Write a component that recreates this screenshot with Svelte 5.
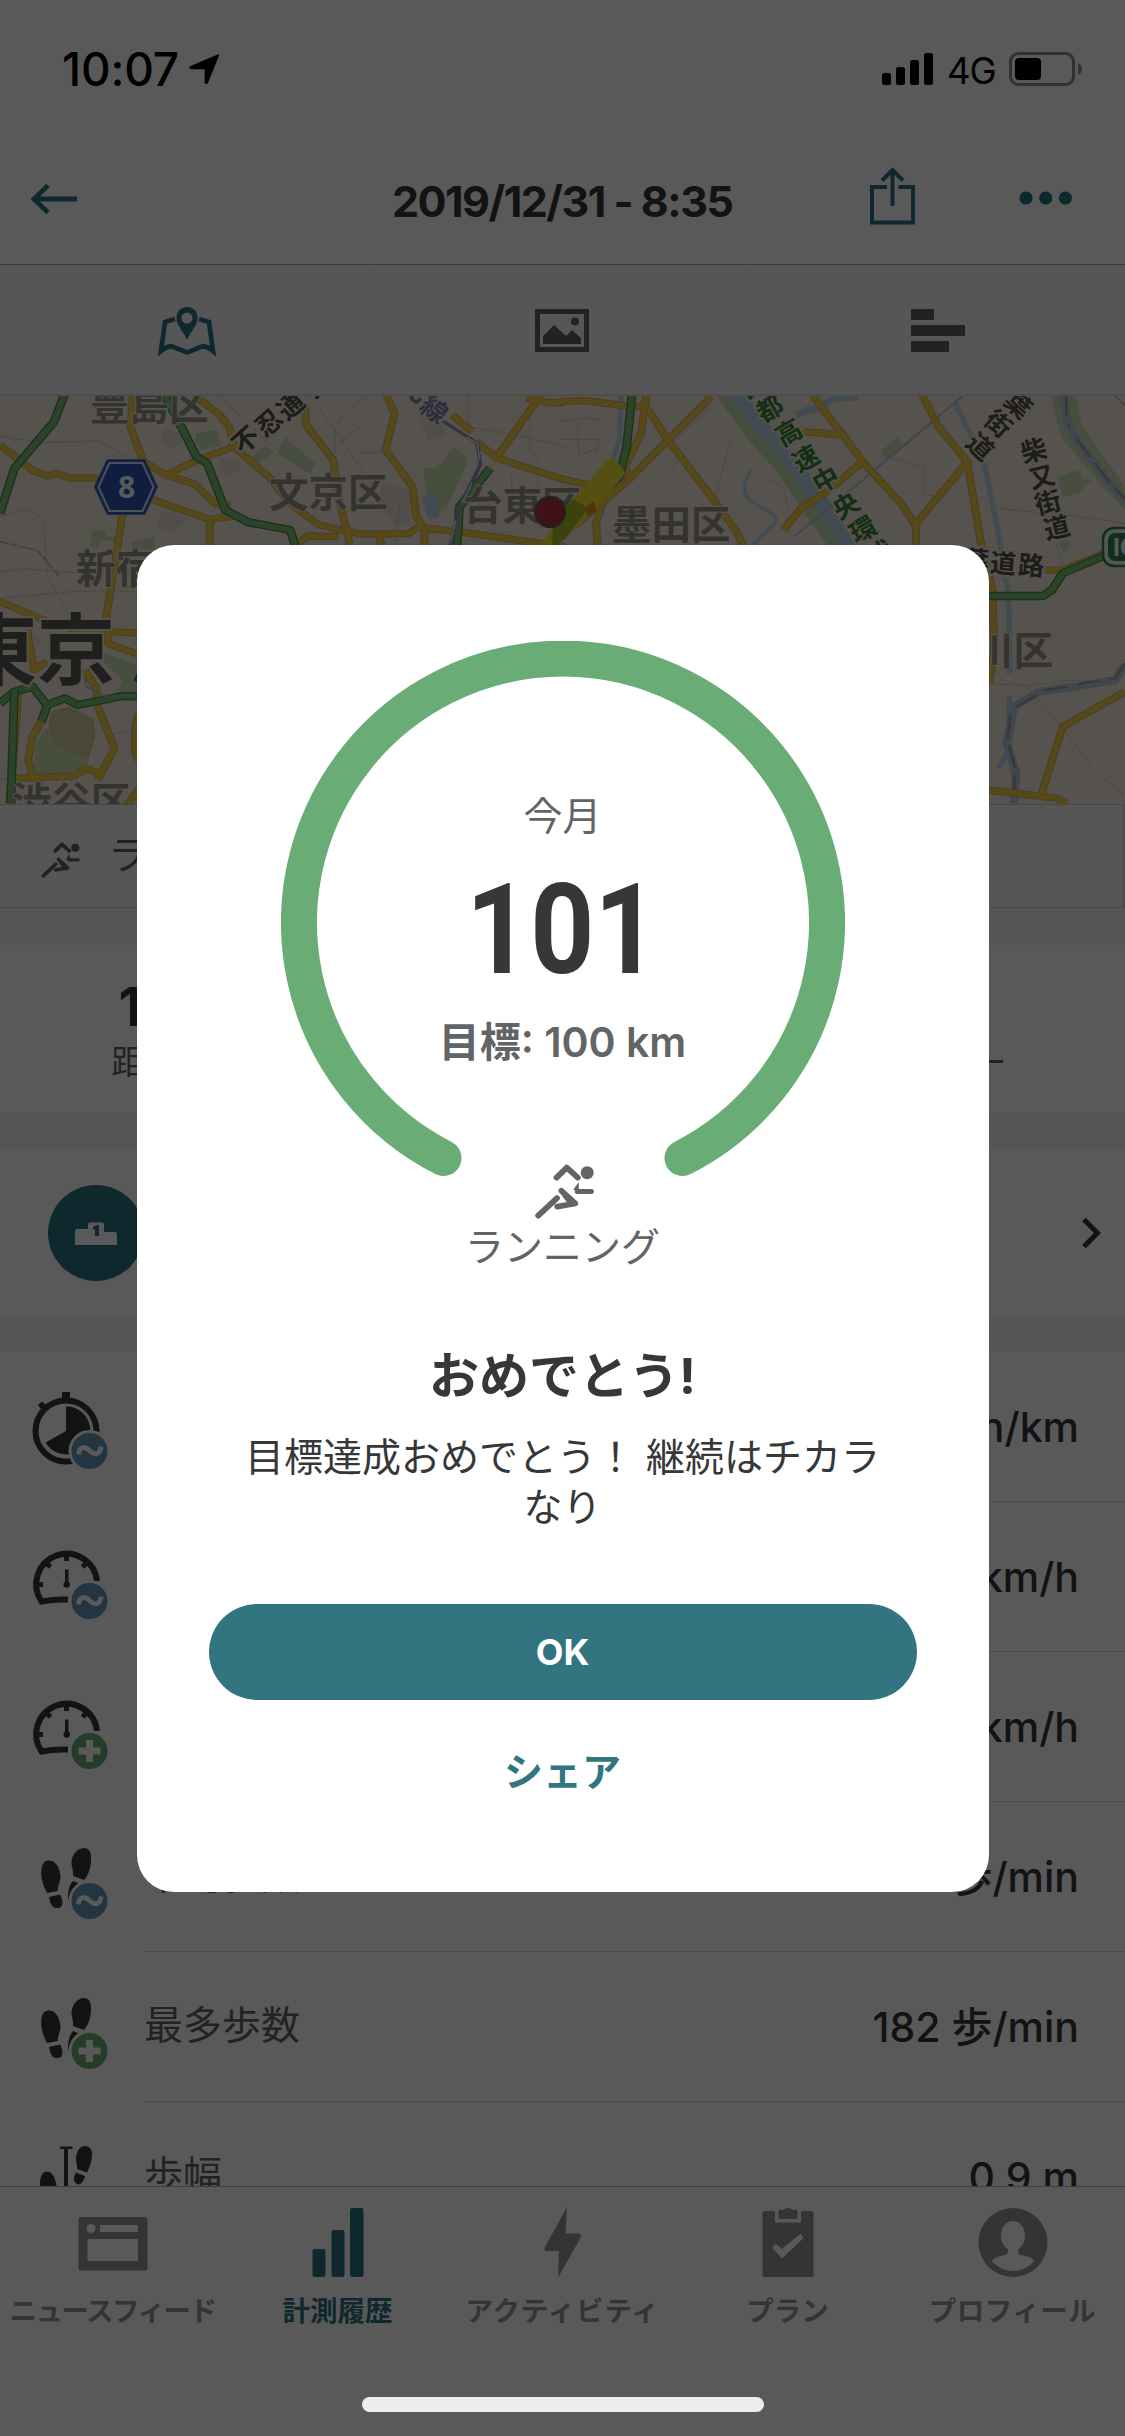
<script>
  const wards = [
    { t: '豊島区', x: 90, y: 24 }, { t: '文京区', x: 269, y: 111 },
    { t: '台東区', x: 463, y: 124 }, { t: '新宿区', x: 76, y: 187 },
    { t: '渋谷区', x: 12, y: 420 }, { t: '墨田区', x: 612, y: 143 },
    { t: '江戸川区', x: 895, y: 269 }
  ];
  // Road names are set one glyph at a time along their road.
  const streets = [
    { c: 'road', r: -42, g: [['不', 246, 44], ['忍', 269, 27], ['通', 291, 10], ['り', 313, -7]] },
    { c: 'road', r: 42, g: [['葉', 1018, 9], ['街', 998, 28], ['道', 980, 51]] },
    { c: 'road', r: -14, g: [['柴', 1034, 55], ['又', 1042, 81], ['街', 1048, 107], ['道', 1057, 132]] },
    { c: 'road', r: 4, g: [['葉', 976, 165], ['道', 1003, 168], ['路', 1031, 170]] },
    { c: 'express', r: -30, g: [['首', 752, -10], ['都', 770, 13], ['高', 789, 37], ['速', 806, 63], ['中', 826, 84], ['央', 846, 110], ['環', 863, 134], ['状', 880, 158]] },
    { c: 'rail', r: 38, g: [['線', 434, 14], ['北', 414, -7]] }
  ];
  const roadsL = [
    'M0 165L60 215L92 243L130 257L160 250L190 264H260L440 335L580 388L650 378L700 400L805 420',
    'M370 0L362 110L398 215L460 255L540 282L598 342L640 345',
    'M550 25L610 75L635 110L650 170L750 265L810 345L885 405L1000 432L1135 430L1160 412L1290 428L1568 470',
    'M460 255L560 205L650 170',
    'M845 40L850 105L925 210L940 330L965 430L970 470',
    'M1070 10L1095 70L1070 180L1145 290L1155 380L1178 415V470',
    'M1255 75L1310 125M1320 155L1380 205L1568 270', 'M1500 15L1380 200', 'M1460 22L1520 38H1568',
    'M340 370L322 500L295 680L300 760L400 800', 'M582 390V470', 'M820 465L855 438L940 440', 'M1050 430L1060 470',
    'M0 635L120 690L210 720L400 730', 'M75 720L95 840L130 815', 'M235 840L268 895L270 945L318 1075L270 1170',
    'M120 985L90 1040L78 1110L90 1160', 'M40 1165L205 1158L240 1135L285 1155', 'M50 900L45 1000L25 1240', 'M385 970L375 1010V1090L385 1110', 'M390 1190L350 1250'
  ];
  const roadsR = [
    'M0 35L70 32L180 48L240 52L300 150L430 335L490 425L510 470', 'M420 20L300 150L195 265L120 335L100 400L105 470',
    'M240 10L225 130L180 230L195 265', 'M0 265L80 285', 'M0 430L50 400L120 335',
    'M700 15L785 135L840 215L950 345L988 410V470', 'M675 125L785 135', 'M840 215L740 305L670 355L620 420',
    'M1005 15L1050 110L1130 215L1170 470L1200 600L1205 780L1190 880', 'M1130 215L985 405',
    'M1345 540L1390 542L1510 490L1568 478', 'M1568 905L1395 1010L1335 1215', 'M1190 1200L1380 1225L1405 1240'
  ];
  const greensL = ['M180 10L150 95L40 235L0 370', 'M455 10L510 125L545 200L575 220L625 360L690 397L805 420L820 470',
    'M1360 235L1275 350L1268 470', 'M0 940L40 905L90 890L130 945L180 925L215 945L340 918L400 920', 'M40 900L30 1240', 'M130 950L115 995'];
  const greensR = ['M200 10L185 170L165 260L60 360L0 440', 'M1190 618H1340L1365 600L1395 550L1515 495'];
  const greysL = ['M0 140L120 158L275 153L360 205', 'M0 380L60 358L90 365L122 390L130 560L185 660', 'M0 545L75 537L230 550L380 540', 'M0 625L200 605H380',
    'M610 20L750 165L900 280', 'M1020 20L960 60L930 110V190', 'M880 45L950 155L1035 290', 'M1470 80V180L1497 215L1490 330', 'M1300 20V110L1410 130', 'M1010 100L940 160',
    'M990 190L1080 185M1110 340L1095 470M1420 250V350M1410 130L1568 170', 'M60 700L120 770M280 1040L370 1020M300 1180L380 1225M0 1168H40'];
  const greysR = ['M0 95L60 85L120 88M0 148H120M48 95L52 200L130 160M110 140L100 200M420 50L300 170', 'M475 145L430 320M350 178L310 240M560 255L620 290L635 360',
    'M880 190L1010 235V310L1060 325', 'M1165 320L1210 355L1400 375L1568 400', 'M1300 180L1400 540', 'M1200 883H1290L1400 1020L1480 1140L1568 1215', 'M1530 870L1400 872L1280 890L1230 870L1195 820'];

  const rows = [
    { icon: 'watch', badge: 'avg', label: '', value: 'min/km' },
    { icon: 'gauge', badge: 'avg', label: '', value: 'km/h' },
    { icon: 'gauge', badge: 'max', label: '', value: 'km/h' },
    { icon: 'steps', badge: 'avg', label: '平均歩数', value: '歩/min' },
    { icon: 'steps', badge: 'max', label: '最多歩数', value: '182 歩/min' },
    { icon: 'stride', badge: '', label: '歩幅', value: '0.9 m' }
  ];
  const tabs = [
    { id: 'news', label: 'ニュースフィード' }, { id: 'bars', label: '計測履歴' }, { id: 'bolt', label: 'アクティビティ' },
    { id: 'plan', label: 'プラン' }, { id: 'user', label: 'プロフィール' }
  ];
</script>

{#snippet runner(cls)}
  <svg class={cls} viewBox="0 0 59 55" fill="none" stroke="currentColor" stroke-width="5.8" stroke-linecap="round" stroke-linejoin="round">
    <path d="M21.5 13.6L31.8 3.6L42.8 13.6M3.2 51.6L22 34.2" /><path d="M26.4 26.8L40.2 39.5L22.2 42.6M30 31L34.5 37" />
    <path stroke-width="5" d="M42.3 27.4H56.4" /><path d="M38 26L43.8 18V26Z" fill="currentColor" stroke="none" />
    <circle cx="52.2" cy="8.7" r="6.5" fill="currentColor" stroke="none" />
  </svg>
{/snippet}

<div class="screen">
  <div class="status">
    <span class="time">10:07</span>
    <svg class="loc" viewBox="0 0 31 30"><path d="M29 1.500L18 28.500Q17 30 16.600 28V15Q16.500 14.200 15.500 14.200H2Q.5 13.800 2 12.900Z" stroke="#000" stroke-width="2" stroke-linejoin="round" /></svg>
    <svg class="signal" viewBox="0 0 51 33"><rect y="21" width="9" height="12" rx="2.500" /><rect x="14" y="15" width="9" height="18" rx="2.500" /><rect x="28" y="8" width="9" height="25" rx="2.500" /><rect x="42" y="1" width="9" height="32" rx="2.500" /></svg>
    <span class="net">4G</span>
    <svg class="battery" viewBox="0 0 75 34"><rect x="1.500" y="1.500" width="63" height="31" rx="8" fill="none" stroke="#8e8e8e" stroke-width="3" /><rect x="6" y="6" width="26" height="22" rx="4" /><path d="M69 11Q73 13 73 17T69 23Z" fill="#8e8e8e" /></svg>
  </div>
  <header>
    <svg class="back" viewBox="0 0 46 30" fill="none" stroke="currentColor" stroke-width="4.800"><path d="M46 15H4M17 1.500L3 15L17 28.500" /></svg>
    <h1>2019/12/31 - 8:35</h1>
    <svg class="share" viewBox="0 0 45 58" fill="none" stroke="currentColor" stroke-width="3.900"><path d="M17 20H2V55.500H43V20H28.500M22.500 39V3M12 13.500L22.500 3L33 13.500" /></svg>
    <svg class="more" viewBox="0 0 54 14" fill="currentColor"><circle cx="7" cy="7" r="6.600" /><circle cx="26.700" cy="7" r="6.600" /><circle cx="46.400" cy="7" r="6.600" /></svg>
  </header>
  <div class="segments">
    <div class="seg on"><svg width="58" height="50" viewBox="0 0 58 50" fill="none" stroke="currentColor" stroke-width="4.800"><path d="M17 13L7 16L3 45Q11 38 18 42L29 46.500L40 42Q47 38 55 45L51 16L41 13" /><path fill="currentColor" fill-rule="evenodd" stroke="none" d="M29 1C22 1 18.500 6 18.500 12C18.500 20 26 26 29 34C32 26 39.500 20 39.500 12C39.500 6 36 1 29 1ZM29 6.500A5.500 5.500 0 1 1 29 17.500A5.500 5.500 0 1 1 29 6.500Z" /></svg></div>
    <div class="seg"><svg width="54" height="44" viewBox="0 0 54 44" fill="currentColor"><path fill-rule="evenodd" d="M0 0H54V43H0ZM5 5V38H49V5Z" /><circle cx="40" cy="12.500" r="4" /><path d="M8 35V27L19 16L31 27L37 21L46 29V35Z" /></svg></div>
    <div class="seg"><svg width="54" height="44" viewBox="0 0 54 44" fill="currentColor"><path d="M0 0H23V11H0ZM0 16H54V27H0ZM0 32H38V43H0Z" /></svg></div>
  </div>

  <svg class="map" viewBox="0 0 1125 408">
    <rect width="1125" height="408" fill="#f5ede0" />
    <g transform="translate(0 -6) scale(.36037 .33333)" fill="none">
      <g fill="#cddfb2"><path d="M545 130L600 120L615 165L560 180L540 160ZM790 140L875 220L860 250L770 190ZM690 210L735 165L760 190L710 225ZM1260 172L1300 210L1240 350L1190 395L1175 235H1210ZM255 420H295V440H320V455L280 450L270 478L250 470ZM360 460L430 440V480L370 475ZM290 790L400 830V910H320L340 870L285 810Z" /><path fill="#d2cf9f" d="M140 965L190 950L260 985L265 1040L240 1130L180 1150L130 1060Z" /><path d="M130 1010L160 1070L250 1110L230 1140L90 1160L100 1060Z" /></g>
      <path fill="#e6ddd6" d="M455 115L510 130L500 165L470 180L445 155ZM1160 80L1230 110L1240 130L1190 155ZM610 195L675 225L640 260L605 235ZM1060 280L1135 300L1140 390L1100 410L1050 350ZM450 360L525 385L480 430L435 410Z" />
      <path fill="#b9d9ec" d="M1170 325L1195 308L1215 330L1217 385L1185 380Z" />
      {#each greysL as d}<path {d} stroke="#cfc9be" stroke-width="2.500" />{/each}
      {#each roadsL as d}<path {d} stroke="#dfaa70" stroke-width="22" stroke-linejoin="round" />{/each}
      {#each roadsL as d}<path {d} stroke="#f2d245" stroke-width="16" stroke-linejoin="round" />{/each}
      {#each greensL as d}<path {d} stroke="#4f8c4b" stroke-width="25" stroke-linejoin="round" /><path {d} stroke="#7dc476" stroke-width="17" stroke-linejoin="round" />{/each}
      <path d="M1225 90L1325 160L1333 225L1275 350L1250 465" stroke="#9190bb" stroke-width="10" /><path d="M1295 142L1325 160L1331 210M1310 278L1282 340M1265 390L1250 460" stroke="#f4f3f8" stroke-width="4" />
      <path d="M0 455L105 482L165 560M235 860L240 890L290 918H400" stroke="#a9b8cf" stroke-width="5" stroke-dasharray="22 4" />
    </g>
    <g transform="translate(560 -6) scale(.36037 .33333)" fill="none">
      <path d="M455 10L530 125L620 235L700 365L770 470" stroke="#c7dcb0" stroke-width="42" /><path d="M480 0L560 110L650 225L730 345L800 470" stroke="#b9d9ec" stroke-width="42" />
      <path fill="#cddfb2" d="M890 185L935 140L950 165L910 205ZM1380 260L1440 240L1450 265L1475 270L1440 310L1395 320ZM1385 455L1415 450L1410 480L1395 485ZM1360 10H1430L1450 110L1568 290V360L1490 270L1390 140Z" />
      <path d="M830 22Q740 18 725 55Q680 55 655 78" stroke="#b9d9ec" stroke-width="22" /><path d="M530 240Q490 310 540 340L570 360Q610 375 595 400L535 465" stroke="#b9d9ec" stroke-width="9" />
      <path d="M1095 35L1140 135L1180 235L1215 420L1245 620L1248 850M1247 915L1245 1080L1215 1135" stroke="#b9d9ec" stroke-width="15" />
      <path d="M1395 10L1410 105L1450 175L1520 270L1568 335M1568 825L1540 870L1420 892L1330 905L1260 950L1240 1060L1265 1150L1260 1240" stroke="#b5cee2" stroke-width="24" />
      <path d="M1405 10V90L1416 115M1432 145L1530 285L1568 325M1568 820L1540 865L1440 882M1410 890L1350 900L1265 950M1250 975L1242 1050L1262 1130L1260 1215" stroke="#b39794" stroke-width="7" stroke-dasharray="70 22" />
      {#each greysR as d}<path {d} stroke="#cfc9be" stroke-width="2.500" />{/each}
      <path d="M170 10L165 150L140 230" stroke="#b9d9ec" stroke-width="14" />
      <path d="M1115 20L940 180L800 305L650 440M1530 10L1568 45" stroke="#b4bfcb" stroke-width="5" stroke-dasharray="34 3" />
      {#each roadsR as d}<path {d} stroke="#dfaa70" stroke-width="22" stroke-linejoin="round" />{/each}
      {#each roadsR as d}<path {d} stroke="#f2d245" stroke-width="16" stroke-linejoin="round" />{/each}
      {#each greensR as d}<path {d} stroke="#4f8c4b" stroke-width="25" stroke-linejoin="round" /><path {d} stroke="#7dc476" stroke-width="17" stroke-linejoin="round" />{/each}
    </g>
    {#each wards as w}<text class="ward" x={w.x} y={w.y}>{w.t}</text>{/each}
    <text class="city" x="-41" y="283">東京</text>
    {#each streets as s}{#each s.g as g}<text class={s.c} text-anchor="middle" transform="translate({g[1]} {g[2]}) rotate({s.r})" y="9">{g[0]}</text>{/each}{/each}
    <path d="M609 70L611 68L619 77L583 119L545 152L575 109Z" fill="#f3e434" stroke="#f3e434" stroke-width="11" stroke-linejoin="round" />
    <path d="M573 103L588 112L566 142L552 152L553 122Z" fill="#a8be25" /><path d="M584 112L594 105L596 115L588 121Z" fill="#e4951b" />
    <circle cx="550" cy="116" r="15.500" fill="#b83247" stroke="#4e7545" stroke-width="1.500" />
    <path d="M96 91L108 65H144L156 91L144 117H108Z" fill="#315dc6" stroke="#315dc6" stroke-width="3.500" stroke-linejoin="round" /><path d="M98.500 91L109.500 67H142.500L153.500 91L142.500 115H109.500Z" fill="#2c53b3" stroke="#dde4f5" stroke-width="2" stroke-linejoin="round" /><text class="shield" x="126.500" y="101.500" text-anchor="middle">8</text>
    <path d="M134 284L142 265V290Z" fill="#2c53b3" />
    <rect x="1103" y="132" width="52" height="38" rx="11" fill="#eff6ef" stroke="#2f8155" stroke-width="2.500" /><rect x="1108" y="137" width="44" height="28" rx="7" fill="#2f8155" /><text class="ic" x="1113" y="160">IC</text>
  </svg>

  <div class="sport">{@render runner('run-sm')}<span>ランニング</span></div>
  <div class="stats">
    <div><b>10.01</b><span>距離 (km)</span></div><div></div><div><b></b><span>カロリー</span></div>
  </div>
  <div class="award">
    <svg class="medal" viewBox="0 0 96 96"><circle cx="48" cy="48" r="48" fill="#2c7480" /><path d="M27 60V46Q27 44 29 44H40V39Q40 37.500 42 37.500H54Q56 37.500 56 39V47H67Q69 47 69 49V60Z" fill="#fff" /><path d="M45 42L49 40H51V51H47V44L45 45Z" fill="#2c7480" /></svg>
    <svg class="chev" viewBox="0 0 20 32" fill="none" stroke="#333436" stroke-width="5"><path d="M3 2.500L16.500 16L3 29.500" /></svg>
  </div>
  <div class="rows">
    {#each rows as r}
      <div class="row">
        <svg class="ri" viewBox="0 0 144 150" fill="#363739">
          {#if r.icon === 'watch'}
            <circle cx="66" cy="79" r="30.500" fill="none" stroke="#363739" stroke-width="6" /><path d="M62 40H70V50H62ZM38 53L42 49.500L48 55L43 60ZM66 54.500V79L45.500 90.500A24 24 0 1 0 66 54.500Z" />
          {:else if r.icon === 'gauge'}
            <path d="M97 79A30.500 30.500 0 1 0 41.500 99.500Q54 97 68 97.500" fill="none" stroke="#363739" stroke-width="6" />
            <path d="M66.500 52V59M46.500 61L50.500 65M86.500 61L82.500 65M36 82.500H43" fill="none" stroke="#363739" stroke-width="5" /><path d="M65 67.500H68.500V80H65Z" /><circle cx="66.700" cy="82.500" r="3.200" />
          {:else if r.icon === 'steps'}
            <path d="M48 58.500C42 59 40.500 67 41.500 75C42.500 82 45 87 47 91L58 89C57 85 60.500 80 60.500 75C60 66 56 58 48 58.500ZM49 95L60 92.500C64 100 63 106 58 106C52 107 50 101 49 95ZM84 46C76 46 71 55 71.500 62C72 66 73.500 69 73 74L84 78C89 73 91.500 63 91 55C91 49 88 46 84 46ZM73 79L85 84L68 98C68 91 68.500 84 73 79Z" />
          {:else}
            <path d="M60 44.500H72.500V47H68V90H64V47H60ZM85 44C79 44 76 51 76 57C76 61 77.500 63 77 67L87 70.500C90 65 92 59 92 52C92 47 89 44 85 44ZM76 70.500L85 74C84 79 81 83 78 82.500C73 81 73 75 76 70.500ZM47 69.500C42 69.500 40 75 40 82V90H57C57 79 53 69 47 69.500Z" />
          {/if}
          {#if r.badge}<circle cx="89.500" cy="99" r="19.500" fill={r.badge === 'avg' ? '#6297bb' : '#69ac73'} stroke="#fff" stroke-width="3" />{/if}
          {#if r.badge === 'avg'}<path d="M78.500 102.500C79 94 86 94 90 99C95 104 100.500 102 101 94.500" fill="none" stroke="#fff" stroke-width="4.800" />
          {:else if r.badge === 'max'}<path d="M86 88H93V95.500H100.500V102.500H93V110H86V102.500H78.500V95.500H86Z" fill="#fff" />{/if}
        </svg>
        <div class="line"><span>{r.label}</span><b>{r.value}</b></div>
      </div>
    {/each}
  </div>
  <nav>
    {#each tabs as t}
      <div class="tab {t.id}" class:on={t.id === 'bars'}>
        <svg width="70" height="72" viewBox="0 0 70 72" fill="currentColor">
          {#if t.id === 'news'}<path fill-rule="evenodd" d="M3 10H67Q69.500 10 69.500 12.500V61Q69.500 63.500 67 63.500H3Q.5 63.500 .5 61V12.500Q.5 10 3 10ZM9.500 32V54H60V32ZM22 18V25H60V18ZM13 17A4.500 4.500 0 1 0 13 26A4.500 4.500 0 1 0 13 17Z" />
          {:else if t.id === 'bars'}<rect x="9.500" y="42" width="13" height="28" rx="2" /><rect x="28.500" y="23" width="13" height="47" rx="2" /><rect x="47" y="1" width="13.500" height="69" rx="2" />
          {:else if t.id === 'bolt'}<path d="M39 0L37.500 26.500H51Q54 27 52.500 31L30 70.500L31 44H18Q15.500 43 17 40Z" />
          {:else if t.id === 'plan'}<path fill-rule="evenodd" d="M12 4H22V15.500H48V4H58Q60.500 4 60.500 6.500V67.500Q60.500 70 58 70H12Q9.500 70 9.500 67.500V6.500Q9.500 4 12 4ZM19.500 41L29 51.500L50.500 31L47.500 26.500L29 42L22.500 36.500Z" /><path d="M25.500 3H30Q35 -1 40 3H44.500V12H25.500Z" />
          {:else}<path fill-rule="evenodd" d="M35 1A34.500 34.500 0 1 0 35 70A34.500 34.500 0 1 0 35 1ZM35 14C42 14 47 20 47 29C47 35 44 39 41 41.500C39 44 40 47 43 48C50 49.500 55 51 56 54C51 60 44 64 35 64S19 60 14 54C15 51 20 49.500 27 48C30 47 31 44 29 41.500C26 39 23 35 23 29C23 20 28 14 35 14Z" />{/if}
        </svg>
        <span>{t.label}</span>
      </div>
    {/each}
  </nav>

  <div class="dim">
    <section class="modal">
      <div class="ring">
        <svg class="arc" viewBox="0 0 564 564"><path d="M162.500 517A264 264 0 1 1 401.500 517" fill="none" stroke="#69ac75" stroke-width="36" stroke-linecap="round" /></svg>
        <div class="inner">
          <span class="period">今月</span><strong>101</strong><span class="goal">目標: 100 km</span>
          {@render runner('run-lg')}<span class="kind">ランニング</span>
        </div>
      </div>
      <h2>おめでとう!</h2>
      <p>目標達成おめでとう！ 継続はチカラ<br />なり</p>
      <button class="ok">OK</button>
      <button class="sh">シェア</button>
    </section>
    <div class="home"></div>
  </div>
</div>

<style>
  :global(body) { background: #595959; }
  .screen { position: relative; width: 1125px; height: 2436px; overflow: hidden; background: #fff; color: #363739; font-family: Inter, "Noto Sans CJK JP", sans-serif; display: flex; flex-direction: column; }
  .screen > * { flex-shrink: 0; }
  svg { display: block; flex-shrink: 0; }
  .status { height: 132px; box-sizing: border-box; display: flex; align-items: flex-start; padding: 0 43px 0 62px; color: #000; }
  .time { font-size: 46px; line-height: 54px; margin-top: 42px; width: 127px; font-weight: 500; letter-spacing: -0.200px; }
  .loc { width: 31px; height: 30px; margin-top: 54px; }
  .signal { width: 51px; height: 33px; margin: 52px 14px 0 auto; }
  .net { font-size: 36.500px; line-height: 42px; margin-top: 50px; width: 62px; font-weight: 400; letter-spacing: -1px; }
  .battery { width: 75px; height: 34px; margin-top: 52px; margin-right: -2px; }
  header { height: 133px; border-bottom: 1px solid #a8a8a8; box-sizing: border-box; display: flex; align-items: flex-start; color: #2c7480; }
  .back { width: 46px; height: 30px; margin: 52px 0 0 31px; }
  h1 { margin: 43px 0 0 315px; width: 342px; font-size: 43px; line-height: 52px; font-weight: 700; color: #363739; letter-spacing: -1.500px; white-space: nowrap; }
  .share { width: 45px; height: 58px; margin: 35px 0 0 136px; }
  .more { width: 54px; height: 14px; margin: 59px 0 0 104px; }
  .segments { height: 131px; display: flex; background: #f6f6f6; border-bottom: 2px solid #ddd; box-sizing: border-box; }
  .seg { flex: 1; display: flex; align-items: center; justify-content: center; padding-top: 3px; color: #626366; border-right: 1px solid #e7e7e7; }
  .seg:last-child { border: 0; }
  .seg.on { color: #2c7480; }
  .map { width: 1125px; height: 408px; overflow: hidden; font-family: "Noto Sans CJK JP", sans-serif; }
  .map text { paint-order: stroke; stroke: #f5ede0; stroke-width: 4px; stroke-linejoin: round; }
  .map .ward { font-size: 39.500px; font-weight: 700; fill: #98938a; stroke-width: 2px; }
  .map .city { font-size: 78px; font-weight: 700; fill: #5b5953; }
  .road, .express, .rail { font-size: 26px; font-weight: 700; }
  .road { fill: #55524c; }
  .express { fill: #3b8438; }
  .rail { fill: #8181b5; }
  .map .shield, .map .ic { font-family: "Noto Sans", sans-serif; font-weight: 700; fill: #fff; stroke: none; font-size: 30px; }
  .map .ic { font-size: 25px; font-family: "Liberation Sans", sans-serif; }
  .sport { height: 104px; box-sizing: border-box; border-top: 1px solid #ccc; border-bottom: 1px solid #d0d0d0; border-right: 2px solid #d0d0d0; background: #f6f6f6; display: flex; align-items: center; padding-left: 41px; color: #626366; font-size: 39px; font-weight: 400; }
  .sport span { line-height: 50px; margin-bottom: 3px; }
  .run-sm { width: 39px; height: 36px; margin: 8px 28px 0 0; }
  .stats { height: 168px; border-top: 37px solid #f3f3f3; border-bottom: 36px solid #f3f3f3; display: grid; grid-template-columns: 369px 387px 369px; }
  .stats div { display: flex; flex-direction: column; align-items: center; padding-top: 30px; }
  .stats b { font-size: 53px; line-height: 64px; height: 64px; }
  .stats span { font-size: 33px; line-height: 46px; font-weight: 400; color: #626366; white-space: nowrap; }
  .award { height: 168px; border-bottom: 35px solid #f3f3f3; display: flex; align-items: center; justify-content: space-between; padding: 0 24px 0 48px; }
  .medal { width: 96px; height: 96px; }
  .chev { width: 20px; height: 32px; }
  .rows { height: 834px; overflow: hidden; }
  .row { height: 150px; display: flex; }
  .ri { width: 144px; height: 150px; }
  .line { flex: 1; display: flex; align-items: center; justify-content: space-between; border-bottom: 1px solid #d5d5d5; padding-right: 46px; }
  .line span { font-size: 39px; line-height: 50px; margin-bottom: 4px; font-weight: 400; color: #626366; }
  .line b { font-size: 41px; line-height: 50px; height: 50px; font-weight: 500; white-space: nowrap; }
  nav { height: 250px; box-sizing: border-box; border-top: 1px solid #b2b2b2; background: #fff; display: grid; grid-template-columns: repeat(5, 225px); }
  .tab { display: flex; flex-direction: column; align-items: center; padding-top: 20px; color: #949494; font-size: 27.500px; font-weight: 700; white-space: nowrap; }
  .tab span { line-height: 36px; margin-top: 14px; }
  .tab.on { color: #2c7480; }
  .news { letter-spacing: -1.500px; }
  .bolt { letter-spacing: 0.900px; }
  .user { letter-spacing: 0.500px; }
  .dim { position: absolute; inset: 0; background: rgba(0, 0, 0, .65); display: flex; flex-direction: column; align-items: center; box-sizing: border-box; padding-top: 545px; }
  .modal { width: 852px; height: 1347px; box-sizing: border-box; background: #fff; border-radius: 37px; padding: 96px 72px 0; display: flex; flex-direction: column; align-items: center; flex-shrink: 0; }
  .ring { display: grid; width: 564px; height: 660px; }
  .arc, .inner { grid-area: 1 / 1; }
  .arc { width: 564px; height: 564px; }
  .inner { display: flex; flex-direction: column; align-items: center; color: #636466; }
  .period { font-size: 39px; font-weight: 400; line-height: 50px; margin-top: 150px; }
  strong { font-family: Roboto, sans-serif; font-size: 127px; font-weight: 700; line-height: 150px; height: 150px; margin-top: 14px; color: #363739; transform: scaleX(.88); }
  .goal { font-size: 41px; font-weight: 600; line-height: 50px; height: 50px; margin-top: 12px; white-space: nowrap; }
  .run-lg { width: 59px; height: 55px; margin-top: 97px; margin-left: 4px; }
  .kind { font-size: 39px; line-height: 50px; font-weight: 400; margin-top: 3px; }
  h2 { margin: 42px 0 0; font-size: 50px; line-height: 66px; height: 66px; font-weight: 700; }
  p { margin: 23px 0 0; font-size: 39px; line-height: 50px; font-weight: 400; text-align: center; white-space: nowrap; }
  button { border: 0; font-family: inherit; font-weight: 700; padding: 0; }
  .ok { width: 708px; height: 96px; border-radius: 48px; margin-top: 72px; background: #327480; color: #fff; font-size: 36px; }
  .sh { margin-top: 39px; height: 60px; background: none; color: #327480; font-size: 39px; }
  .home { width: 402px; height: 15px; border-radius: 8px; background: #ededed; margin-top: 505px; flex-shrink: 0; }
</style>
